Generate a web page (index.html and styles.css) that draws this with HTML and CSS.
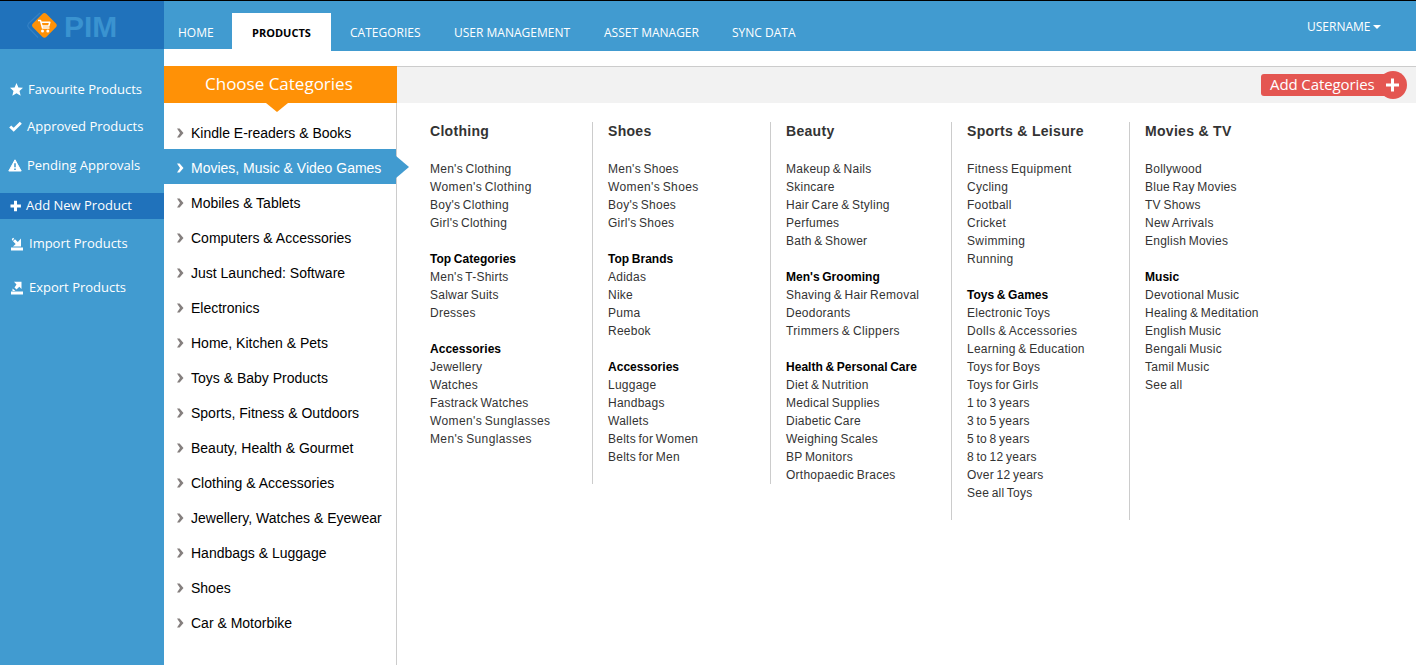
FILE: index.html
```html
<!DOCTYPE html>
<html lang="en">
<head>
<meta charset="utf-8">
<title>PIM</title>
<link rel="stylesheet" href="styles.css">
</head>
<body>
<svg class="defs" width="0" height="0"><symbol id="chev" viewBox="0 0 7 10"><path d="M0 .5h2.600L6.500 5 2.600 9.500H0L3 5z" fill="currentColor"/></symbol></svg>
<div class="app">
  <aside class="sidebar">
    <div class="brand">
      <svg class="brand-mark" width="34" height="30" viewBox="0 0 34 30">
        <path d="M14 3 2.500 13.500q-1.500 2 0 4L12 27.500" fill="none" stroke="#3480c4" stroke-width="1.200"/>
        <rect x="8.900" y="5.900" width="19" height="19" rx="3" fill="#ff9106" transform="rotate(45 18.400 15.400)"/>
        <path d="M12 10.500h2.500l2 7.500h7M15 12.300h8.800l-1 3.700h-6.600" fill="none" stroke="#fff" stroke-width="1.500" stroke-linejoin="round"/>
        <circle cx="16.500" cy="20.900" r="1.500" fill="#fff"/><circle cx="21.800" cy="20.900" r="1.500" fill="#fff"/>
      </svg>
      <span class="brand-name">PIM</span>
    </div>
    <nav class="side-nav">
      <a class="side-item fav"><svg width="13" height="13" viewBox="0 0 13 13"><path fill="#fff" d="M6.500 0 8.400 4.400 13 4.800 9.500 8l1.200 4.800-4.200-2.500-4.200 2.500L3.500 8 0 4.800l4.600-.4z"/></svg><span>Favourite Products</span></a>
      <a class="side-item appr"><svg width="13" height="13" viewBox="0 0 13 13"><path d="M1.200 6.500 4.700 9.800 11.800 2.800" fill="none" stroke="#fff" stroke-width="2.900"/></svg><span>Approved Products</span></a>
      <a class="side-item pend"><svg width="14" height="13" viewBox="0 0 14 13"><path d="M7 .8 13.200 12H.8z" fill="#fff" stroke="#fff" stroke-linejoin="round"/><path d="M7 4.300v4M7 9.400v1.500" stroke="#419bd0" stroke-width="1.600"/></svg><span>Pending Approvals</span></a>
      <a class="side-item add"><svg width="12" height="12" viewBox="0 0 12 12"><path d="M5.500 .8v10.400M.5 6h10.400" stroke="#fff" stroke-width="3"/></svg><span>Add New Product</span></a>
      <a class="side-item imp"><svg width="13" height="14" viewBox="0 0 13 14"><path d="M1 10.500h12V13.500H1zM11 1.500v8H3L5.700 7 3 4.300l2-2L7.800 5zM2.300 1.200 4.200.8 3 3.800 1.800 3z" fill="#fff"/></svg><span>Import Products</span></a>
      <a class="side-item exp"><svg width="13" height="14" viewBox="0 0 13 14"><path d="M1 10.500h12V13.500H1zM4 .8h7.500V8L9.300 5.800 6.500 8.500 4.500 6.500 6.500 3.500zM2.500 7.500l3 2.500h-3z" fill="#fff"/></svg><span>Export Products</span></a>
    </nav>
  </aside>
  <div class="page">
    <header class="topbar">
      <nav class="tabs">
        <a class="tab home"><span>HOME</span></a>
        <a class="tab active"><span>PRODUCTS</span></a>
        <a class="tab cats"><span>CATEGORIES</span></a>
        <a class="tab users"><span>USER MANAGEMENT</span></a>
        <a class="tab assets"><span>ASSET MANAGER</span></a>
        <a class="tab sync"><span>SYNC DATA</span></a>
      </nav>
      <div class="user"><span>USERNAME</span><i class="caret"></i></div>
    </header>
    <main class="content">
      <section class="chooser">
        <h1 class="chooser-title"><span>Choose Categories</span></h1>
        <ul class="cat-list">
          <li class="cat"><svg class="chev"><use href="#chev"/></svg><span>Kindle E-readers &amp; Books</span></li>
          <li class="cat selected"><svg class="chev"><use href="#chev"/></svg><span>Movies, Music &amp; Video Games</span></li>
          <li class="cat"><svg class="chev"><use href="#chev"/></svg><span>Mobiles &amp; Tablets</span></li>
          <li class="cat"><svg class="chev"><use href="#chev"/></svg><span>Computers &amp; Accessories</span></li>
          <li class="cat"><svg class="chev"><use href="#chev"/></svg><span>Just Launched: Software</span></li>
          <li class="cat"><svg class="chev"><use href="#chev"/></svg><span>Electronics</span></li>
          <li class="cat"><svg class="chev"><use href="#chev"/></svg><span>Home, Kitchen &amp; Pets</span></li>
          <li class="cat"><svg class="chev"><use href="#chev"/></svg><span>Toys &amp; Baby Products</span></li>
          <li class="cat"><svg class="chev"><use href="#chev"/></svg><span>Sports, Fitness &amp; Outdoors</span></li>
          <li class="cat"><svg class="chev"><use href="#chev"/></svg><span>Beauty, Health &amp; Gourmet</span></li>
          <li class="cat"><svg class="chev"><use href="#chev"/></svg><span>Clothing &amp; Accessories</span></li>
          <li class="cat"><svg class="chev"><use href="#chev"/></svg><span>Jewellery, Watches &amp; Eyewear</span></li>
          <li class="cat"><svg class="chev"><use href="#chev"/></svg><span>Handbags &amp; Luggage</span></li>
          <li class="cat"><svg class="chev"><use href="#chev"/></svg><span>Shoes</span></li>
          <li class="cat"><svg class="chev"><use href="#chev"/></svg><span>Car &amp; Motorbike</span></li>
        </ul>
      </section>
      <section class="panel">
        <div class="toolbar">
          <a class="add-btn"><span class="add-label">Add Categories</span><span class="add-plus"><svg width="14" height="14" viewBox="0 0 14 14"><path d="M6.500 .5v13M0 7h13" stroke="#fff" stroke-width="3"/></svg></span></a>
        </div>
        <div class="columns">
          <div class="col clothing">
            <h2>Clothing</h2>
            <ul><li>Men's Clothing</li><li class="wide">Women's Clothing</li><li>Boy's Clothing</li><li>Girl's Clothing</li></ul>
            <h3>Top Categories</h3>
            <ul><li>Men's T-Shirts</li><li>Salwar Suits</li><li>Dresses</li></ul>
            <h3>Accessories</h3>
            <ul><li>Jewellery</li><li>Watches</li><li>Fastrack Watches</li><li class="wide">Women's Sunglasses</li><li class="wide">Men's Sunglasses</li></ul>
          </div>
          <div class="col shoes">
            <h2>Shoes</h2>
            <ul><li>Men's Shoes</li><li class="wide">Women's Shoes</li><li>Boy's Shoes</li><li>Girl's Shoes</li></ul>
            <h3>Top Brands</h3>
            <ul><li>Adidas</li><li>Nike</li><li>Puma</li><li>Reebok</li></ul>
            <h3>Accessories</h3>
            <ul><li>Luggage</li><li>Handbags</li><li>Wallets</li><li>Belts for Women</li><li>Belts for Men</li></ul>
          </div>
          <div class="col beauty">
            <h2>Beauty</h2>
            <ul><li>Makeup &amp; Nails</li><li>Skincare</li><li>Hair Care &amp; Styling</li><li>Perfumes</li><li>Bath &amp; Shower</li></ul>
            <h3>Men's Grooming</h3>
            <ul><li>Shaving &amp; Hair Removal</li><li>Deodorants</li><li class="wide">Trimmers &amp; Clippers</li></ul>
            <h3>Health &amp; Personal Care</h3>
            <ul><li>Diet &amp; Nutrition</li><li>Medical Supplies</li><li>Diabetic Care</li><li>Weighing Scales</li><li>BP Monitors</li><li>Orthopaedic Braces</li></ul>
          </div>
          <div class="col sports">
            <h2>Sports &amp; Leisure</h2>
            <ul><li class="wide">Fitness Equipment</li><li>Cycling</li><li>Football</li><li>Cricket</li><li class="wide">Swimming</li><li>Running</li></ul>
            <h3>Toys &amp; Games</h3>
            <ul><li>Electronic Toys</li><li class="wide">Dolls &amp; Accessories</li><li>Learning &amp; Education</li><li>Toys for Boys</li><li>Toys for Girls</li><li>1 to 3 years</li><li>3 to 5 years</li><li>5 to 8 years</li><li>8 to 12 years</li><li>Over 12 years</li><li>See all Toys</li></ul>
          </div>
          <div class="col movies">
            <h2>Movies &amp; TV</h2>
            <ul><li>Bollywood</li><li>Blue Ray Movies</li><li>TV Shows</li><li>New Arrivals</li><li>English Movies</li></ul>
            <h3>Music</h3>
            <ul><li>Devotional Music</li><li>Healing &amp; Meditation</li><li>English Music</li><li>Bengali Music</li><li>Tamil Music</li><li>See all</li></ul>
          </div>
        </div>
      </section>
    </main>
  </div>
</div>
</body>
</html>
```
FILE: styles.css
```css
* { box-sizing: border-box; }
body { margin: 0; background: #fff; font-family: "Liberation Sans", Arial, sans-serif; overflow: hidden; }
ul, h1, h2, h3 { margin: 0; padding: 0; list-style: none; }
.defs { display: none; }
.app { display: flex; height: 665px; border-top: 1px solid #000; }

.sidebar { width: 164px; background: #419bd0; flex: none; }
.brand { height: 48px; background: #2072bb; display: flex; align-items: flex-start; padding: 9px 0 0 26px; }
.brand-mark { flex: none; }
.brand-name { font-weight: bold; font-size: 30px; line-height: 33px; color: #3a93d0; margin-left: 4px; }
.side-nav { display: flex; flex-direction: column; }
.side-item { display: flex; align-items: center; height: 26px; padding-left: 10px; gap: 5px; color: #fff; font: 13px/24px "Open Sans", sans-serif; white-space: nowrap; }
.side-item svg { flex: none; margin-top: -1px; }
.side-item span { height: 26px; }
.fav { margin-top: 28px; }
.appr { margin-top: 11px; padding-left: 9px; }
.pend { margin-top: 13px; padding-left: 8px; }
.add { margin-top: 14px; background: #2072bb; gap: 4px; }
.imp { margin-top: 12px; gap: 6px; }
.exp { margin-top: 18px; gap: 6px; }

.page { flex: 1; display: flex; flex-direction: column; min-width: 0; }
.topbar { height: 50px; display: flex; justify-content: space-between; background: #419bd0; color: #fff; font: 12px/18px "Open Sans", sans-serif; }
.tabs { display: flex; }
.tab { padding-top: 23px; white-space: nowrap; }
.home { width: 68px; padding-left: 14px; border-bottom: 2px solid #fff; }
.active { width: 99px; margin-top: 12px; padding: 11px 0 0 20px; background: #fff; color: #000; font-weight: bold; font-size: 11px; }
.cats { padding-left: 19px; width: 123px; }
.users { width: 150px; }
.assets { width: 128px; }
.user { display: flex; padding-top: 17px; width: 109px; }
.caret { margin: 7px 0 0 2px; width: 0; height: 0; border: 4px solid transparent; border-top-color: #fff; border-bottom: 0; }

.content { flex: 1; display: flex; margin-top: 15px; }
.chooser { width: 233px; flex: none; border-right: 1px solid #ccc; }
.chooser-title { position: relative; width: 233px; height: 37px; background: #ff9106; color: #fff; font: 17px/36px "Open Sans", sans-serif; padding-left: 41px; white-space: nowrap; }
.chooser-title::after { content: ""; position: absolute; left: 102px; top: 37px; border: 11px solid transparent; border-top: 9px solid #ff9106; border-bottom: 0; }
.cat-list { padding-top: 11px; }
.cat { position: relative; display: flex; align-items: center; height: 35px; padding: 2px 0 0 13px; gap: 7px; font-size: 14px; white-space: nowrap; color: #000; }
.chev { width: 7px; height: 10px; color: #857f7e; flex: none; }
.selected { background: #419bd0; color: #fff; }
.selected .chev { color: #fff; }
.selected::after { content: ""; position: absolute; left: 232px; top: 7px; border: 11px solid transparent; border-left: 13px solid #419bd0; border-right: 0; }

.panel { flex: 1; min-width: 0; }
.toolbar { height: 37px; background: #f2f2f2; border-top: 1px solid #ccc; display: flex; justify-content: flex-end; padding: 4px 9px 0 0; }
.add-btn { display: flex; height: 28px; align-items: center; color: #fff; }
.add-label { height: 22px; width: 126px; padding-left: 9px; margin-right: -8px; background: #e45651; border-radius: 3px 0 0 3px; font: 15px/21px "Open Sans", sans-serif; letter-spacing: -.1px; white-space: nowrap; }
.add-plus { width: 28px; height: 28px; border-radius: 50%; background: #e45651; display: flex; align-items: center; justify-content: center; }
.columns { display: flex; align-items: flex-start; padding: 19px 0 0 33px; color: #333; font-size: 12px; line-height: 18px; letter-spacing: .25px; word-spacing: -1px; }
.wide { letter-spacing: .37px; }
.col { white-space: nowrap; border-right: 1px solid #ccc; margin-right: 15px; }
.col h2 { font-size: 14px; line-height: 18px; letter-spacing: .3px; word-spacing: 0; margin-bottom: 20px; }
.col h3 { font-size: 12px; line-height: 18px; letter-spacing: .03px; word-spacing: -.8px; color: #000; margin-top: 18px; }
.clothing { width: 163px; height: 362px; }
.shoes { width: 163px; height: 362px; }
.beauty { width: 166px; height: 398px; }
.sports { width: 163px; height: 398px; }
.movies { border-right: 0; }
```
